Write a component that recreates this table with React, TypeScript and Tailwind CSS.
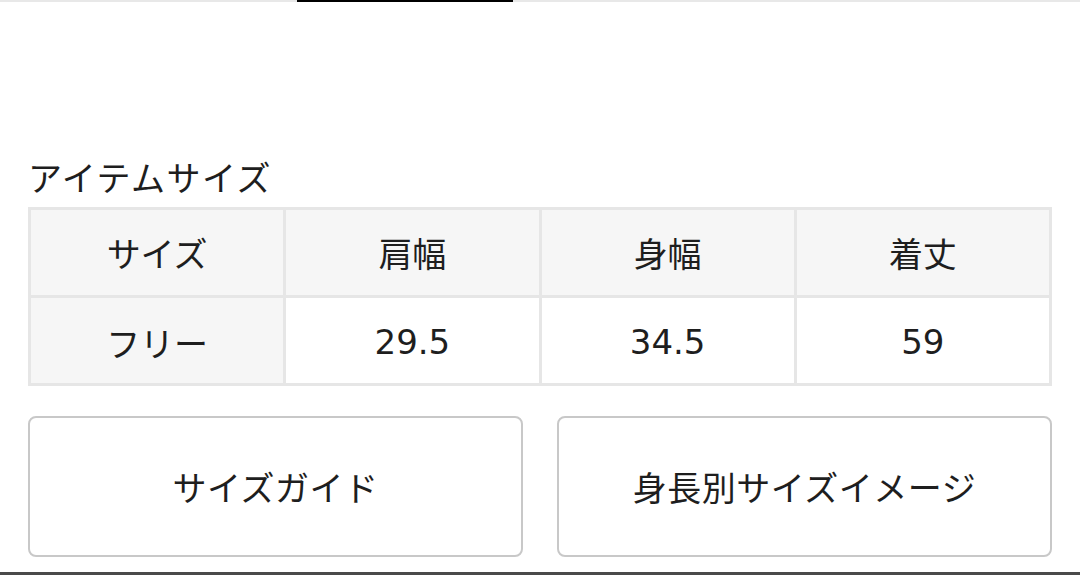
const headers = ['サイズ', '肩幅', '身幅', '着丈'];
const values = ['フリー', '29.5', '34.5', '59'];

const App = () => {
  return (
    <div
      className="w-[1080px] h-[575px] bg-white flex flex-col text-[#1e1e1e]"
      style={{ fontFamily: '"Noto Sans CJK JP", "Noto Sans", sans-serif' }}
    >
      {/* tab indicator */}
      <div className="flex h-[2px]">
        <div className="w-[297px] bg-[#e8e8e8]" />
        <div className="w-[216px] bg-black" />
        <div className="flex-1 bg-[#e8e8e8]" />
      </div>

      <h2 className="mt-[154px] ml-[28px] text-[34px] leading-[42px] font-normal tracking-[1.5px]">アイテムサイズ</h2>

      <div className="mt-[9px] ml-[28px] w-[1024px] grid grid-cols-4 gap-[3px] p-[3px] bg-[#e6e6e6]">
        {headers.map((h) => (
          <div key={h} className="h-[85px] bg-[#f6f6f6] flex items-center justify-center text-[34px]">
            {h}
          </div>
        ))}
        {values.map((v, i) => (
          <div
            key={v}
            className={`h-[85px] flex items-center justify-center pt-[4px] ${
              i === 0 ? 'bg-[#f6f6f6] text-[34px]' : 'bg-white text-[34px] font-["DejaVu_Sans",sans-serif]'
            }`}
          >
            {v}
          </div>
        ))}
      </div>

      <div className="mt-[30px] ml-[28px] w-[1024px] flex gap-[34px]">
        <button className="flex-1 h-[141px] border-2 border-[#c8c8c8] rounded-lg bg-white text-[34px] tracking-[0.5px]">
          サイズガイド
        </button>
        <button className="flex-1 h-[141px] border-2 border-[#c8c8c8] rounded-lg bg-white text-[34px] tracking-[0.5px]">
          身長別サイズイメージ
        </button>
      </div>

      <div className="mt-auto h-[3px] bg-[#4a4a4a]" />
    </div>
  );
};

export default App;
